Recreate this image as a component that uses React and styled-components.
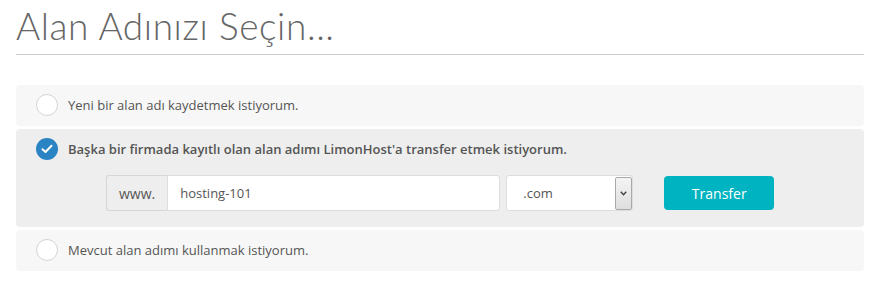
import React, { useState } from 'react';
import styled, { createGlobalStyle } from 'styled-components';

const GlobalStyle = createGlobalStyle`
    body {
        margin:0;
        background:#fff;
        font-family:"Open Sans", "Liberation Sans", sans-serif;
    }
`

const Page = styled.div`
    padding:0 10px 0 16px;
    width:848px;
`

const Title = styled.h1`
    margin:0;
    padding:6px 0 8px 0;
    font-family:Lato, "Open Sans", sans-serif;
    font-weight:300;
    font-size:37px;
    letter-spacing:0.6px;
    line-height:40px;
    color:#666;
    border-bottom:1px solid #ccc;
`

const Options = styled.div`
    margin-top:30px;
    display:flex;
    flex-direction:column;
    gap:3px;
`

const Option = styled.div`
    background:${({active})=>active ? '#eeeeee' : '#f7f7f7'};
    border-radius:4px;
    padding:${({active})=>active ? '9px 20px 16px 20px' : '9px 20px 10px 20px'};
`

const OptionHead = styled.label`
    display:flex;
    align-items:center;
    gap:10px;
    font-size:13px;
    font-weight:${({active})=>active ? 600 : 400};
    color:#555;
    cursor:pointer;
    height:22px;
`

const Radio = styled.span`
    width:22px;
    height:22px;
    box-sizing:border-box;
    border-radius:50%;
    border:${({checked})=>checked ? 'none' : '1px solid #d4d4d4'};
    background:${({checked})=>checked ? '#2a83c3' : '#fff'};
    display:flex;
    align-items:center;
    justify-content:center;
    flex-shrink:0;
`

const FormRow = styled.div`
    display:flex;
    align-items:center;
    margin:15px 0 0 70px;
`

const InputGroup = styled.div`
    display:flex;
    height:36px;
`

const Addon = styled.span`
    display:flex;
    align-items:center;
    padding:0 12px;
    background:#eee;
    border:1px solid #d6d6d6;
    border-right:none;
    border-radius:3px 0 0 3px;
    font-size:14px;
    color:#555;
`

const TextInput = styled.input`
    width:333px;
    box-sizing:border-box;
    border:1px solid #ddd;
    border-radius:0 3px 3px 0;
    padding:0 12px;
    font-family:"Open Sans", "Liberation Sans", sans-serif;
    font-size:13px;
    color:#555;
    outline:none;
`

const SelectBox = styled.div`
    margin-left:6px;
    width:127px;
    height:36px;
    box-sizing:border-box;
    border:1px solid #ddd;
    border-radius:3px;
    background:#fff;
    display:flex;
    align-items:center;
    font-size:13px;
    color:#555;
`

const SelectValue = styled.span`
    flex:1;
    padding-left:16px;
`

const SelectArrow = styled.span`
    width:17px;
    height:33px;
    box-sizing:border-box;
    border:1px solid #a9a9a9;
    border-radius:2px;
    background:linear-gradient(#f4f4f4, #dedede);
    display:flex;
    align-items:center;
    justify-content:center;
`

const Button = styled.button`
    margin-left:31px;
    width:110px;
    height:34px;
    border:none;
    border-radius:4px;
    background:#00b3c0;
    color:#fff;
    font-family:"Open Sans", "Liberation Sans", sans-serif;
    font-size:14px;
    cursor:pointer;
`

const options = [
    'Yeni bir alan adı kaydetmek istiyorum.',
    "Başka bir firmada kayıtlı olan alan adımı LimonHost'a transfer etmek istiyorum.",
    'Mevcut alan adımı kullanmak istiyorum.',
]

const Check = () => (
    <svg width="12" height="10" viewBox="0 0 12 10">
        <path d="M1.5 5.2 L4.5 8 L10.5 1.8" fill="none" stroke="#fff" strokeWidth="2" strokeLinecap="round" strokeLinejoin="round"/>
    </svg>
)

const App = () => {
    const [selected, setSelected] = useState(1)
    const [domain, setDomain] = useState('hosting-101')

    return(
        <Page>
            <GlobalStyle/>
            <Title>Alan Adınızı Seçin...</Title>
            <Options>
                {options.map((text, i) => (
                    <Option key={i} active={selected === i}>
                        <OptionHead active={selected === i} onClick={()=>setSelected(i)}>
                            <Radio checked={selected === i}>{selected === i && <Check/>}</Radio>
                            {text}
                        </OptionHead>
                        {selected === i && i === 1 && (
                            <FormRow>
                                <InputGroup>
                                    <Addon>www.</Addon>
                                    <TextInput value={domain} onChange={e=>setDomain(e.target.value)}/>
                                </InputGroup>
                                <SelectBox>
                                    <SelectValue>.com</SelectValue>
                                    <SelectArrow>
                                        <svg width="7" height="5" viewBox="0 0 7 5">
                                            <path d="M0.8 0.8 L3.5 3.8 L6.2 0.8" fill="none" stroke="#444" strokeWidth="1.4"/>
                                        </svg>
                                    </SelectArrow>
                                </SelectBox>
                                <Button>Transfer</Button>
                            </FormRow>
                        )}
                    </Option>
                ))}
            </Options>
        </Page>
    )
}

export default App
